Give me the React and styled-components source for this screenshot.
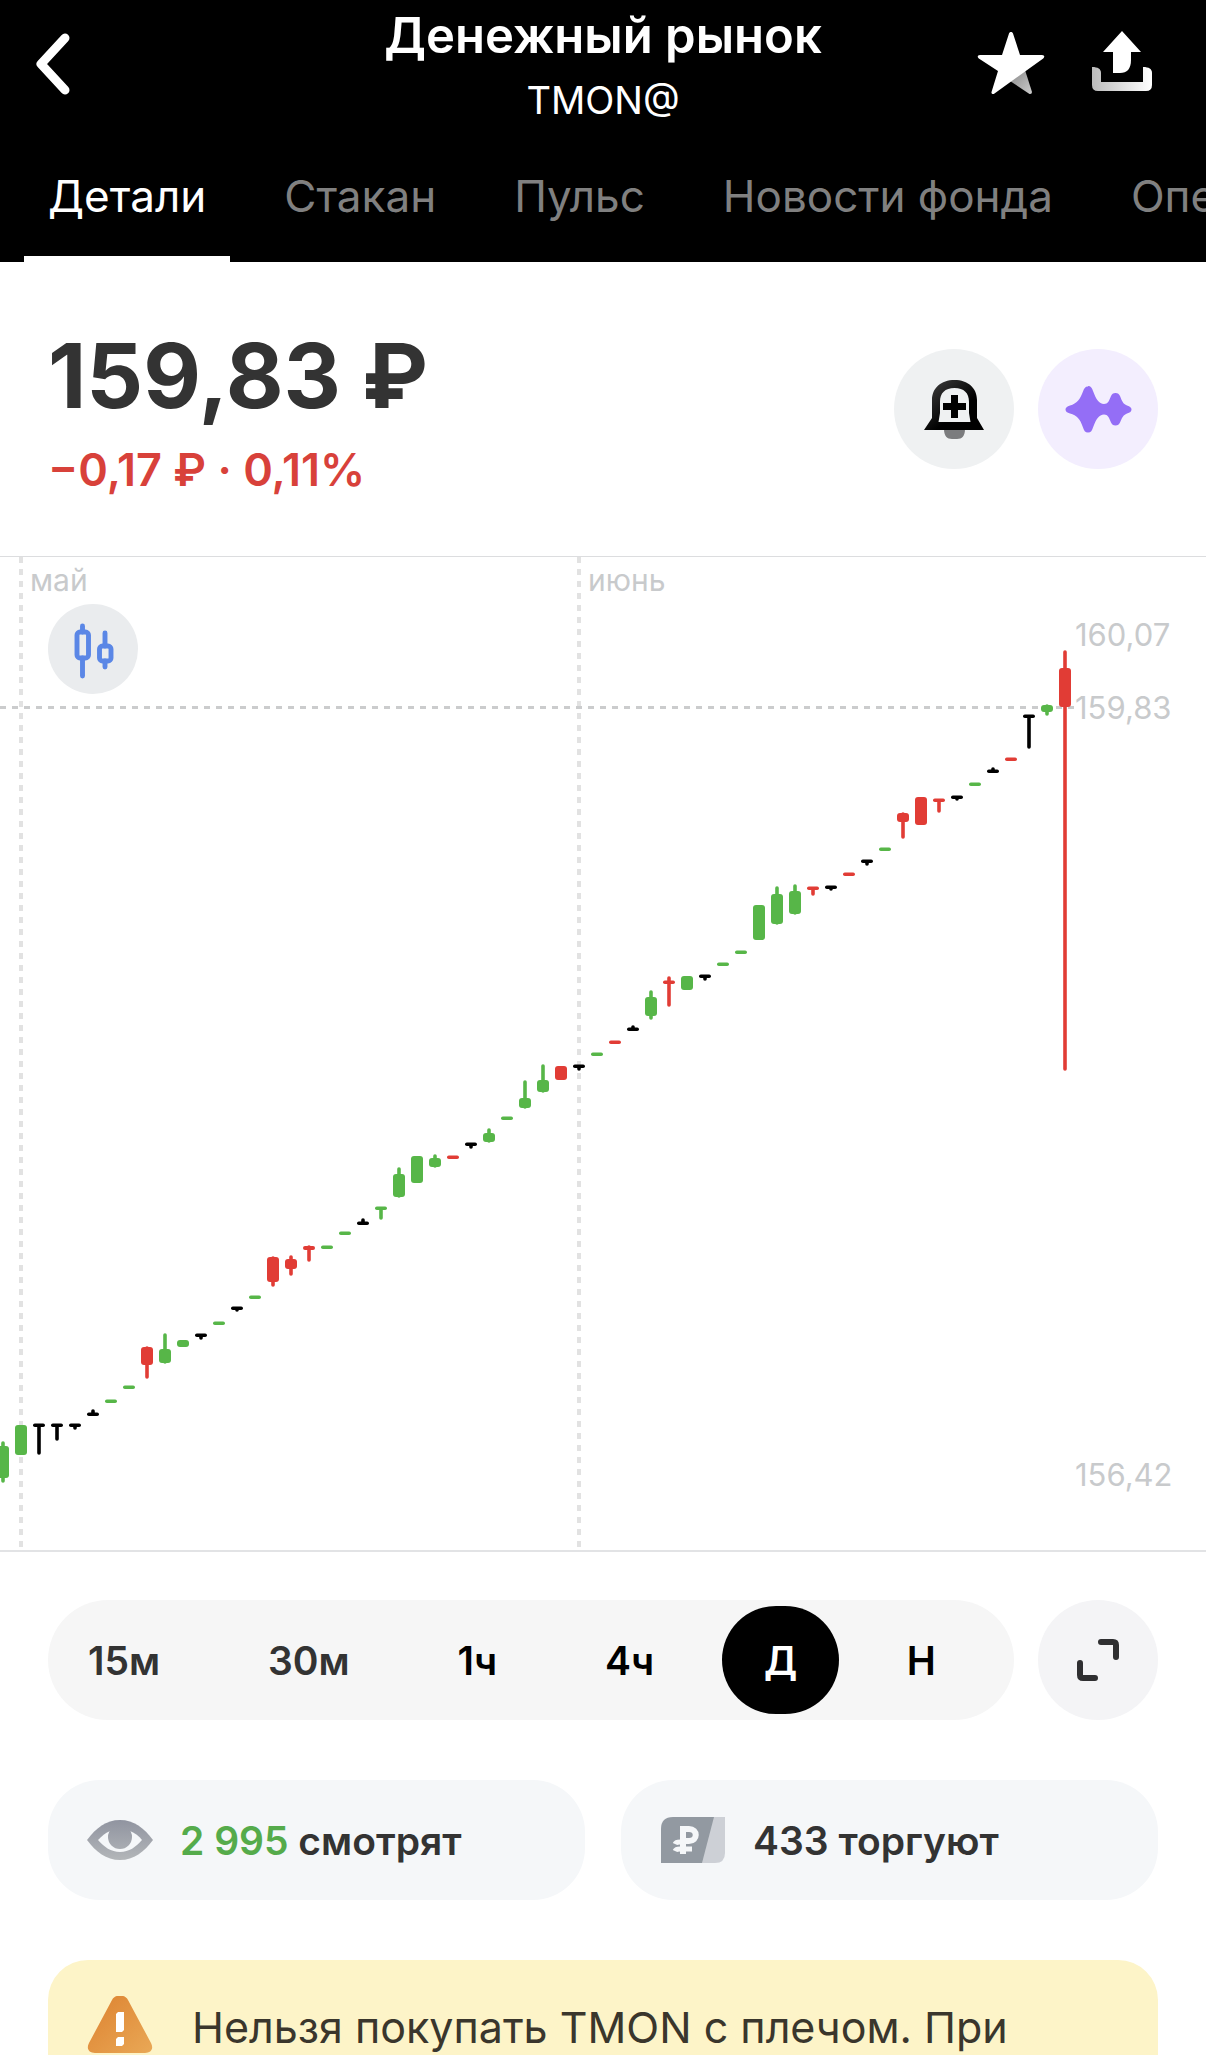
import React, { useState } from 'react';
import styled, { createGlobalStyle } from 'styled-components';

const GlobalStyle = createGlobalStyle`
  * {
    box-sizing: border-box;
  }
  body {
    margin: 0;
    background-color: #fff;
    color: #333;
    font-family: Inter, 'Liberation Sans', sans-serif;
  }
  button {
    border: none;
    padding: 0;
    background: none;
    font-family: inherit;
    cursor: pointer;
  }
`;

const Screen = styled.div`
  display: flex;
  flex-direction: column;
  height: 100vh;
  overflow: hidden;
`;

const Header = styled.header`
  background-color: #000;
  color: #fff;
`;

const TitleBar = styled.div`
  display: grid;
  grid-template-columns: 1fr auto 1fr;
  grid-template-rows: 126px;
  align-items: center;
  padding: 0 48px;
`;

const TitleText = styled.div`
  align-self: start;
  padding-top: 4px;
  text-align: center;
`;

const Title = styled.h1`
  margin: 0;
  font-size: 49px;
  line-height: 64px;
  font-weight: 600;
`;

const Ticker = styled.div`
  font-size: 38px;
  line-height: 64px;
`;

const IconButton = styled.button`
  display: block;
  width: 72px;
  height: 72px;
`;

const BackButton = styled(IconButton)`
  margin-left: -18px;
`;

const Actions = styled.div`
  display: flex;
  justify-content: flex-end;
  gap: 40px;
`;

const Tabs = styled.nav`
  display: flex;
  gap: 30px;
  height: 136px;
  padding: 0 24px;
  overflow: hidden;
`;

const Tab = styled.a`
  flex: none;
  padding: 40px 24px 0;
  border-bottom: 6px solid ${({ $active }) => ($active ? '#fff' : 'transparent')};
  color: ${({ $active }) => ($active ? '#fff' : '#808080')};
  font-size: 44px;
  line-height: 60px;
  text-decoration: none;
  white-space: nowrap;
`;

const Quote = styled.section`
  display: flex;
  justify-content: space-between;
  align-items: flex-start;
  padding: 66px 48px 50px;
`;

const Price = styled.div`
  font-size: 89px;
  line-height: 96px;
  font-weight: 700;
`;

const Change = styled.div`
  margin-top: 10px;
  color: #d8413a;
  font-size: 45px;
  line-height: 72px;
  font-weight: 600;
`;

const QuoteActions = styled.div`
  display: flex;
  gap: 24px;
  padding-top: 21px;
`;

const RoundButton = styled.button`
  display: flex;
  flex: none;
  align-items: center;
  justify-content: center;
  width: ${({ $size }) => $size || 120}px;
  height: ${({ $size }) => $size || 120}px;
  border-radius: 50%;
  background-color: ${({ $bg }) => $bg};
`;

const ChartBox = styled.section`
  position: relative;
  border-top: 1px solid #dcdddf;
  border-bottom: 2px solid #e2e3e5;
`;

const ChartSvg = styled.svg`
  display: block;
  width: 100%;
  height: auto;
  font-size: 30px;
  fill: #c8cacc;
`;

const PriceLabel = styled.text`
  font-size: 31px;
`;

const ChartMode = styled.div`
  position: absolute;
  top: 47px;
  left: 48px;
`;

const Periods = styled.section`
  display: flex;
  gap: 24px;
  padding: 48px 48px 60px;
`;

const PeriodBar = styled.div`
  display: flex;
  flex: 1;
  justify-content: space-between;
  padding: 6px 38px 6px 0;
  border-radius: 60px;
  background-color: #f6f6f6;
`;

const Period = styled.button`
  min-width: ${({ $active }) => ($active ? '117px' : '0')};
  height: 108px;
  padding: 0 40px;
  border-radius: 54px;
  background-color: ${({ $active }) => ($active ? '#000' : 'transparent')};
  color: ${({ $active, $soft }) => ($active && '#fff') || ($soft ? '#333' : '#000')};
  font-size: 39px;
  font-weight: 600;
`;

const Stats = styled.section`
  display: grid;
  grid-template-columns: 1fr 1fr;
  gap: 36px;
  padding: 0 48px 60px;
`;

const Stat = styled.a`
  display: flex;
  align-items: center;
  gap: 24px;
  height: 120px;
  padding: 0 36px;
  border-radius: 52px;
  background-color: #f5f7f9;
  color: #333;
  font-size: 39px;
  font-weight: 600;
  text-decoration: none;
`;

const Positive = styled.span`
  color: #55ab4b;
`;

const Notice = styled.section`
  display: flex;
  flex: 1 0 auto;
  gap: 36px;
  margin: 0 48px;
  padding: 36px 36px 0;
  border-radius: 40px 40px 0 0;
  background-color: #fdf4c8;
  color: #3a362c;
`;

const NoticeText = styled.p`
  margin: 0;
  font-size: 43px;
  line-height: 62px;
`;

const GREEN = '#57b648';
const RED = '#e13c35';
const BLACK = '#000';
const STEP = 18;

// [color, body top, body bottom, high, low], a flat body is drawn as a thin bar
const candles = [
  [GREEN, 889, 921, 885, 925],
  [GREEN, 868, 898],
  [BLACK, 868, 868, 868, 897],
  [BLACK, 868, 868, 868, 883],
  [BLACK, 868, 868, 868, 872],
  [BLACK, 857, 857, 853, 857],
  [GREEN, 844, 844],
  [GREEN, 830, 830],
  [RED, 790, 808, 790, 821],
  [GREEN, 792, 806, 777, 806],
  [GREEN, 783, 790],
  [BLACK, 778, 778, 778, 782],
  [GREEN, 766, 766],
  [BLACK, 751, 751, 751, 754],
  [GREEN, 740, 740],
  [RED, 700, 725, 700, 729],
  [RED, 702, 712, 699, 718],
  [RED, 689, 693, 689, 704],
  [GREEN, 690, 690],
  [GREEN, 676, 676],
  [BLACK, 666, 666, 662, 666],
  [GREEN, 651, 651, 651, 662],
  [GREEN, 617, 640, 611, 640],
  [GREEN, 599, 626],
  [GREEN, 601, 610, 598, 610],
  [RED, 600, 600],
  [BLACK, 587, 587, 587, 591],
  [GREEN, 576, 585, 572, 585],
  [GREEN, 561, 561],
  [GREEN, 541, 551, 524, 551],
  [GREEN, 523, 535, 508, 535],
  [RED, 509, 523],
  [BLACK, 509, 509, 509, 513],
  [GREEN, 497, 497],
  [RED, 485, 485],
  [BLACK, 472, 472, 469, 472],
  [GREEN, 440, 459, 434, 462],
  [RED, 425, 425, 420, 449],
  [GREEN, 419, 433],
  [BLACK, 419, 419, 419, 423],
  [GREEN, 407, 407],
  [GREEN, 395, 395],
  [GREEN, 348, 383],
  [GREEN, 337, 367, 330, 367],
  [GREEN, 334, 357, 328, 357],
  [RED, 331, 331, 331, 338],
  [BLACK, 330, 330, 330, 333],
  [RED, 317, 317],
  [BLACK, 304, 304, 304, 308],
  [GREEN, 292, 292],
  [RED, 256, 265, 256, 281],
  [RED, 240, 268],
  [RED, 243, 243, 243, 255],
  [BLACK, 240, 240, 240, 243],
  [GREEN, 227, 227],
  [BLACK, 214, 214, 211, 214],
  [RED, 202, 202],
  [BLACK, 159, 159, 159, 191],
  [GREEN, 148, 155, 148, 158],
  [RED, 111, 150, 94, 513],
];

const Candle = ({ x, data: [color, top, bottom, high, low] }) => {
  const flat = top === bottom;
  const y = flat ? top - 1.5 : top;
  const height = flat ? 3.6 : bottom - top;
  return (
    <g fill={color} stroke={color}>
      {high !== undefined && (
        <line x1={x} x2={x} y1={high + 1} y2={low - 1} strokeWidth="3.6" strokeLinecap="round" />
      )}
      <rect x={x - 6} y={y} width="12" height={height} rx={Math.min(3, height / 2)} stroke="none" />
    </g>
  );
};

const Chart = () => (
  <ChartSvg viewBox="0 0 1206 993">
    <g stroke="#e2e2e2" strokeWidth="4" strokeDasharray="6 6">
      <line x1="21" x2="21" y1="0" y2="990" />
      <line x1="579" x2="579" y1="0" y2="990" />
    </g>
    <line x1="0" x2="1074" y1="150.5" y2="150.5" stroke="#cbcccd" strokeWidth="3" strokeDasharray="6 6" />
    <text x="30" y="34">май</text>
    <text x="588" y="34">июнь</text>
    <PriceLabel x="1075" y="89">160,07</PriceLabel>
    <PriceLabel x="1075" y="162">159,83</PriceLabel>
    <PriceLabel x="1075" y="929">156,42</PriceLabel>
    {candles.map((data, i) => (
      <Candle key={i} x={3 + i * STEP} data={data} />
    ))}
  </ChartSvg>
);

const BackIcon = () => (
  <svg width="72" height="72" viewBox="0 0 72 72" fill="none">
    <path d="M35 11 11 37l24 26" stroke="#fff" strokeWidth="9" strokeLinecap="round" strokeLinejoin="round" />
  </svg>
);

const StarIcon = () => (
  <svg width="72" height="72" viewBox="-1 0 72 72">
    <defs>
      <linearGradient id="star" x1="0" y1="0" x2="1" y2="1">
        <stop offset="0" stopColor="#888" />
        <stop offset="1" stopColor="#ccc" />
      </linearGradient>
    </defs>
    <path d="m35 54 15-11 7 22q0 2.500-2.500 2z" fill="url(#star)" />
    <path
      d="M36 5c1 0 1.600.5 2 1.500L45 28h22c2.500 0 3 2 1.200 3.400L19.500 66.500c-1.700 1.200-3.600.3-2.900-1.800L23 44 3.800 31.400C2 30 2.500 28 5 28h22l7-21.500C34.400 5.500 35 5 36 5z"
      fill="#fff"
    />
  </svg>
);

const ShareIcon = () => (
  <svg width="72" height="72" viewBox="0 0 72 72">
    <defs>
      <linearGradient id="tray" x1="0" y1="0" x2="1" y2="0">
        <stop offset="0" stopColor="#bbb" />
        <stop offset="1" stopColor="#fff" />
      </linearGradient>
    </defs>
    <path d="M36 4 55 25H45v8c0 9-4 13-11 13h-7V25H17z" fill="#fff" />
    <path d="M6 40c6 0 9 2 9 6v9h42V40c6 0 9 2 9 6v12q0 6-6 6H12q-6 0-6-6z" fill="url(#tray)" />
  </svg>
);

const BellIcon = () => (
  <svg width="72" height="72" viewBox="0 0 72 72">
    <defs>
      <linearGradient id="bell" x1="0" y1="0" x2="0.6" y2="0.6">
        <stop offset="0" stopColor="#444" />
        <stop offset="1" stopColor="#000" />
      </linearGradient>
    </defs>
    <path d="M26 56h21c0 7-3 10-8 10h-5c-5 0-8-3-8-10z" fill="#7b7c7e" />
    <path
      fillRule="evenodd"
      d="M36.500 7C23 7 14 15 14 27v18L6 57h60l-7-12V27C59 15 50 7 36.500 7zm0 8C46 15 51 20 51 29v11l1.500 9h-32l1.500-9V29c0-9 5-14 14.500-14z"
      fill="url(#bell)"
    />
    <path d="M33 22h7v8h8v7h-8v8h-7v-8h-8v-7h8z" fill="#000" />
  </svg>
);

const PulseIcon = () => (
  <svg width="72" height="72" viewBox="2 0 72 72">
    <path
      d="M28 13c3 0 4 2 5 5 3 8 6 13 11 13 4 0 5-3 7-8 1-2 2-3 4.500-3s3.500 1 4.500 3c2 5 3 8 7 9.500 3 1 4.500 2 4.500 4s-1.500 3-4.500 4c-4 1.500-5 4.500-7 9-1 2-2 3-4.500 3s-3.500-1-4.500-3c-2-5-3-8-7-8-5 0-8 5-11 13-1 3-2 5-5 5s-4-2-5-5c-3-9-6-12-13-14-3-1-4.500-2-4.500-4s1.500-3 4.500-4c7-2 10-6 13-14 1-3 2-5 5-5z"
      fill="#946ef6"
    />
  </svg>
);

const CandlesIcon = () => (
  <svg width="60" height="60" viewBox="0 0 60 60" fill="none" stroke="#5b87e6" strokeWidth="4.900" strokeLinecap="round">
    <path d="M19.500 7v6M19.500 39v18M42 14v13M42 42v6" />
    <rect x="14" y="13" width="11.500" height="26" rx="3" />
    <rect x="36.500" y="27" width="11.500" height="15" rx="3" />
  </svg>
);

const ExpandIcon = () => (
  <svg width="60" height="60" viewBox="0 0 60 60" fill="none" stroke="#2f2f31" strokeWidth="6" strokeLinecap="round">
    <path d="M33 12h12q3 0 3 3v12M12 33v12q0 3 3 3h12" />
  </svg>
);

const EyeIcon = () => (
  <svg width="72" height="72" viewBox="0 0 72 72">
    <defs>
      <linearGradient id="eye" gradientUnits="userSpaceOnUse" x1="0" y1="16" x2="0" y2="56">
        <stop offset="0" stopColor="#9094a0" />
        <stop offset="1" stopColor="#b3b6b9" />
      </linearGradient>
    </defs>
    <path d="M3 36C12 24 22 16 36 16s24 8 33 20c-9 12-19 20-33 20S12 48 3 36z" fill="url(#eye)" />
    <path d="M14 36c4-4 7-7 12-9h20c5 2 9 5 12 9-6 7-13 12-22 12s-16-5-22-12z" fill="#f5f7f9" />
    <circle cx="36" cy="33" r="12" fill="url(#eye)" />
  </svg>
);

const RubleIcon = () => (
  <svg width="72" height="72" viewBox="0 0 72 72">
    <path d="M56 13h12v36q0 10-10 10H44z" fill="#cdd0d6" />
    <path d="M4 25Q4 13 16 13h41L45 59H4z" fill="#9299a1" />
    <g fill="none" stroke="#f5f7f9">
      <path d="M26 50V25h6c9 0 9 12 0 12h-6" strokeWidth="6" />
      <path d="M18 40q1-2 5-2h4M18 47q1-2 5-2h12" strokeWidth="5" />
    </g>
  </svg>
);

const WarningIcon = () => (
  <svg width="72" height="72" viewBox="0 0 72 72">
    <defs>
      <linearGradient id="warning" x1="0" y1="0" x2="1" y2="1">
        <stop offset="0" stopColor="#dd8230" />
        <stop offset="1" stopColor="#e9a856" />
      </linearGradient>
    </defs>
    <path d="M28 4c3-6 13-6 16 0l23 43c3 6 0 10-6 10H11c-6 0-9-4-6-10z" fill="url(#warning)" />
    <path d="M34 16h6v18l-2 2h-6V18zM34 41h6v7l-2 2h-6v-7z" fill="#fff" />
  </svg>
);

const tabs = ['Детали', 'Стакан', 'Пульс', 'Новости фонда', 'Операции'];
const periods = ['15м', '30м', '1ч', '4ч', 'Д', 'Н'];

const App = () => {
  const [tab, setTab] = useState('Детали');
  const [period, setPeriod] = useState('Д');

  return (
    <Screen>
      <GlobalStyle />
      <Header>
        <TitleBar>
          <BackButton aria-label="Назад">
            <BackIcon />
          </BackButton>
          <TitleText>
            <Title>Денежный рынок</Title>
            <Ticker>TMON@</Ticker>
          </TitleText>
          <Actions>
            <IconButton aria-label="В избранное">
              <StarIcon />
            </IconButton>
            <IconButton aria-label="Поделиться">
              <ShareIcon />
            </IconButton>
          </Actions>
        </TitleBar>
        <Tabs>
          {tabs.map(name => (
            <Tab key={name} href="#" $active={name === tab} onClick={() => setTab(name)}>
              {name}
            </Tab>
          ))}
        </Tabs>
      </Header>
      <Quote>
        <div>
          <Price>159,83 ₽</Price>
          <Change>−0,17 ₽ · 0,11%</Change>
        </div>
        <QuoteActions>
          <RoundButton $bg="#eff1f2" aria-label="Уведомить о цене">
            <BellIcon />
          </RoundButton>
          <RoundButton $bg="#f3eefe" aria-label="Помощник">
            <PulseIcon />
          </RoundButton>
        </QuoteActions>
      </Quote>
      <ChartBox>
        <Chart />
        <ChartMode>
          <RoundButton $size={90} $bg="#eaecee" aria-label="Вид графика">
            <CandlesIcon />
          </RoundButton>
        </ChartMode>
      </ChartBox>
      <Periods>
        <PeriodBar>
          {periods.map((name, i) => (
            <Period key={name} $active={name === period} $soft={i < 2} onClick={() => setPeriod(name)}>
              {name}
            </Period>
          ))}
        </PeriodBar>
        <RoundButton $bg="#f4f4f6" aria-label="На весь экран">
          <ExpandIcon />
        </RoundButton>
      </Periods>
      <Stats>
        <Stat href="#">
          <EyeIcon />
          <span>
            <Positive>2 995</Positive> смотрят
          </span>
        </Stat>
        <Stat href="#">
          <RubleIcon />
          <span>433 торгуют</span>
        </Stat>
      </Stats>
      <Notice>
        <WarningIcon />
        <NoticeText>Нельзя покупать TMON с плечом. При</NoticeText>
      </Notice>
    </Screen>
  );
};

export default App;
